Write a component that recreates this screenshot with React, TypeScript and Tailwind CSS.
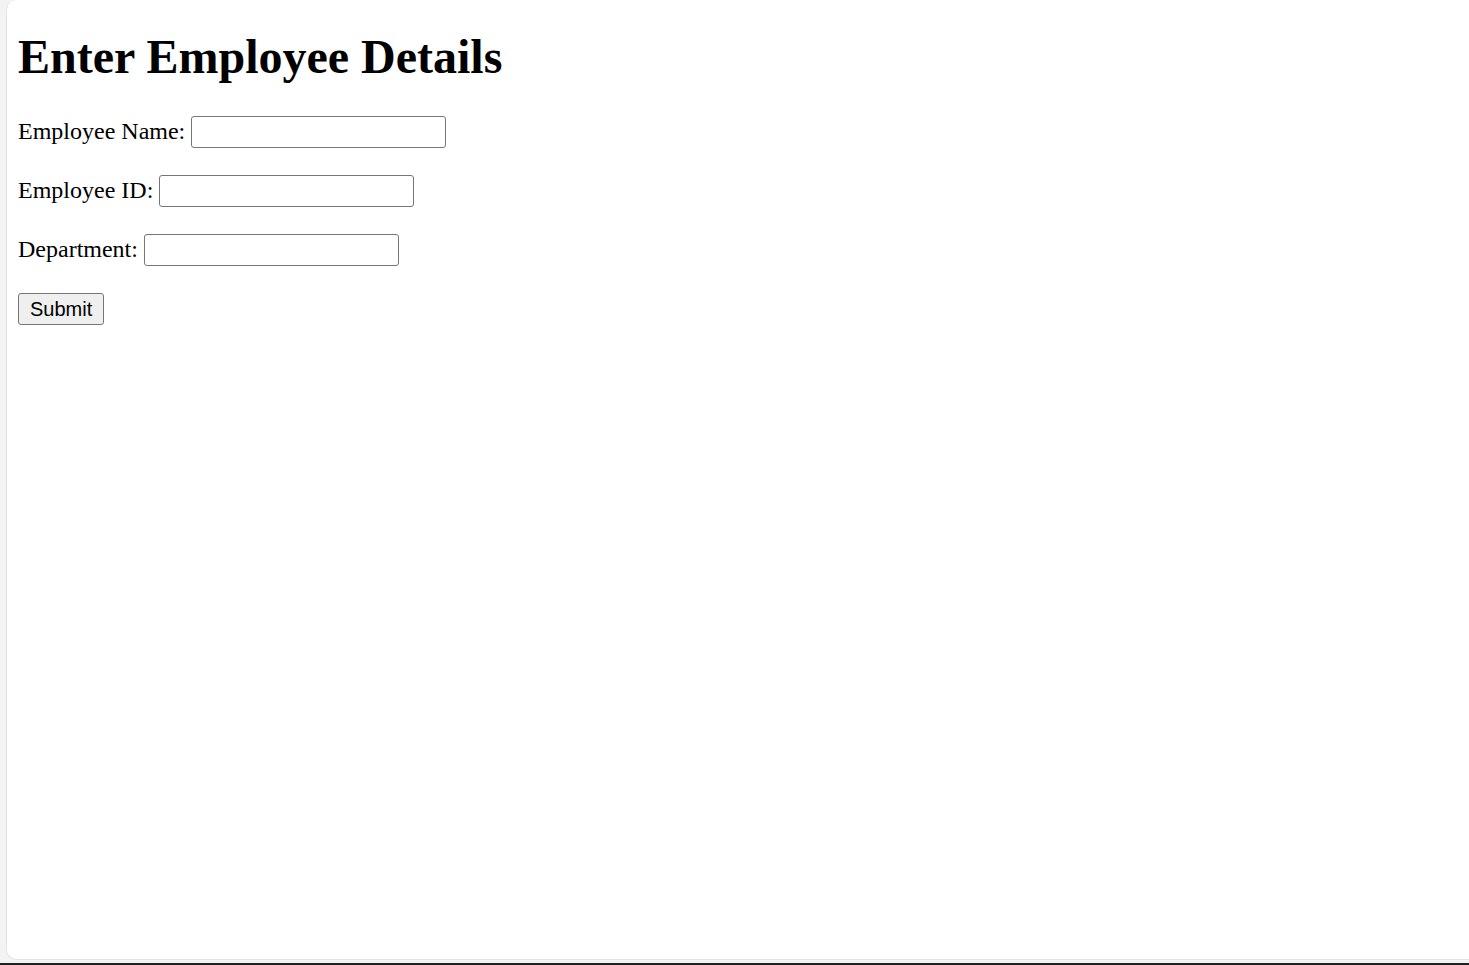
export default function App() {
  const rows = [
    { label: "Employee Name:", id: "name" },
    { label: "Employee ID:", id: "eid" },
    { label: "Department:", id: "dept" },
  ];
  return (
    <div className="w-full h-[965px] bg-[#f3f3f3] flex flex-col overflow-hidden">
      <div className="flex-1 flex pl-[6px] pb-[3px] min-h-0">
        <div className="flex-1 bg-white rounded-l-[10px] border-l border-b border-[#e3e3e3] pl-[11px] pt-[29px] text-black [font-family:'Liberation_Serif','Times_New_Roman',serif]">
          <h1 className="text-[48px] font-bold leading-[55px] m-0 h-[55px]">Enter Employee Details</h1>
          <div className="mt-[32px] flex flex-col gap-[27px]">
            {rows.map((r) => (
              <div key={r.id} className="flex items-start h-[32px]">
                <label htmlFor={r.id} className="text-[24px] leading-[28px] pt-[1px] whitespace-pre">{r.label} </label>
                <input
                  id={r.id}
                  type="text"
                  className="w-[255px] h-[32px] border-[1.5px] border-[#767676] rounded-[3px] bg-white px-[3px] text-[20px] [font-family:'Liberation_Sans',Arial,sans-serif] outline-none"
                />
              </div>
            ))}
            <div className="flex">
              <button className="h-[32px] px-[11px] border-[1.5px] border-[#767676] rounded-[3px] bg-[#efefef] text-[20px] leading-[22px] text-black [font-family:'Liberation_Sans',Arial,sans-serif]">
                Submit
              </button>
            </div>
          </div>
        </div>
      </div>
      <div className="h-[2px] bg-[#202020]" />
    </div>
  );
}
